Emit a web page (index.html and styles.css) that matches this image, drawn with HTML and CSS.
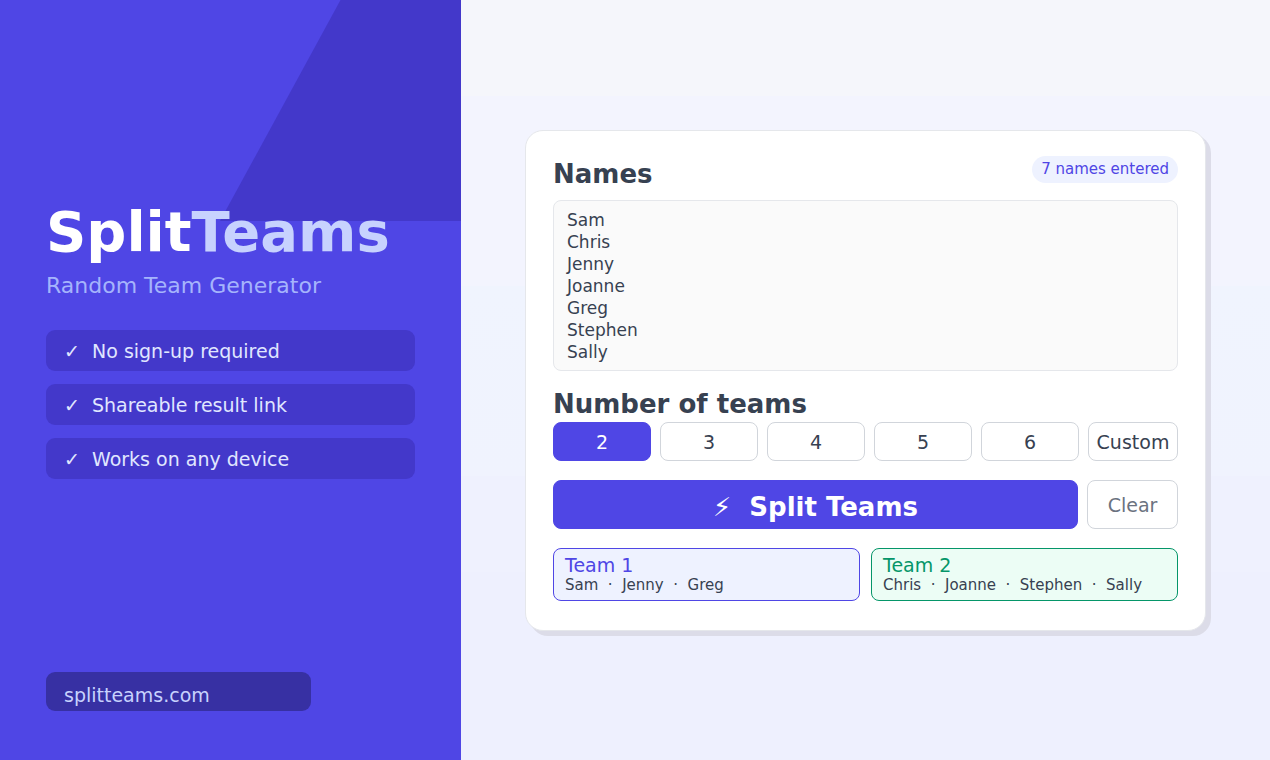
FILE: index.html
```html
<!DOCTYPE html>
<html lang="en">
<head>
    <meta charset="UTF-8">
    <meta name="viewport" content="width=device-width, initial-scale=1.0">
    <title>SplitTeams - Random Team Generator</title>
    <link rel="stylesheet" href="styles.css">
</head>
<body>
    <aside class="brand">
        <div class="intro">
            <h1>Split<span>Teams</span></h1>
            <p class="tagline">Random Team Generator</p>
            <ul class="features">
                <li><span class="tick">✓</span>No sign-up required</li>
                <li><span class="tick">✓</span>Shareable result link</li>
                <li><span class="tick">✓</span>Works on any device</li>
            </ul>
        </div>
        <a class="site" href="#">splitteams.com</a>
    </aside>

    <main>
        <form class="card">
            <div class="card-head">
                <label class="heading" for="names">Names</label>
                <span class="count">7 names entered</span>
            </div>
            <textarea id="names" rows="7" spellcheck="false">Sam
Chris
Jenny
Joanne
Greg
Stephen
Sally</textarea>

            <h2 class="heading">Number of teams</h2>
            <div class="sizes">
                <button type="button" class="active">2</button>
                <button type="button">3</button>
                <button type="button">4</button>
                <button type="button">5</button>
                <button type="button">6</button>
                <button type="button" class="custom">Custom</button>
            </div>

            <div class="actions">
                <button type="button" class="split"><span class="bolt">⚡</span>Split Teams</button>
                <button type="button" class="clear">Clear</button>
            </div>

            <div class="teams">
                <section class="team">
                    <h3>Team 1</h3>
                    <p>Sam&nbsp; ·&nbsp; Jenny&nbsp; ·&nbsp; Greg</p>
                </section>
                <section class="team green">
                    <h3>Team 2</h3>
                    <p>Chris&nbsp; ·&nbsp; Joanne&nbsp; ·&nbsp; Stephen&nbsp; ·&nbsp; Sally</p>
                </section>
            </div>
        </form>
    </main>
</body>
</html>
```
FILE: styles.css
```css
* {
    box-sizing: border-box;
}
body {
    margin: 0;
    min-height: 100vh;
    display: flex;
    font-family: "DejaVu Sans", sans-serif;
    color: #374151;
}
h1, h2, h3, p, ul {
    margin: 0;
    padding: 0;
}
button, textarea {
    font-family: inherit;
    color: inherit;
}

/* left side */
.brand {
    position: relative;
    width: 36.3%;
    padding: 199px 46px 49px;
    display: flex;
    flex-direction: column;
    justify-content: space-between;
    align-items: flex-start;
    background-color: #4f46e5;
}
.brand::before {
    content: "";
    position: absolute;
    top: 0;
    right: 0;
    width: 241px;
    height: 221px;
    background-color: #4338ca;
    clip-path: polygon(50% 0, 100% 0, 100% 100%, 0 100%);
}
.intro {
    position: relative;
    width: 100%;
}
h1 {
    font-size: 56px;
    line-height: 66px;
    color: #ffffff;
}
h1 span {
    color: #c7d2fe;
}
.tagline {
    margin-top: 7px;
    font-size: 22px;
    line-height: 28px;
    color: #a5b4fc;
}
.features {
    margin-top: 30px;
    display: flex;
    flex-direction: column;
    gap: 13px;
    list-style: none;
}
.features li {
    padding: 2px 18px 0;
    display: flex;
    font-size: 19px;
    line-height: 39px;
    border-radius: 9px;
    background-color: #4338ca;
    color: #e0e7ff;
}
.tick {
    width: 28px;
}
.site {
    width: 265px;
    padding: 8px 18px 0;
    font-size: 19px;
    line-height: 31px;
    border-radius: 9px;
    background-color: #3730a3;
    color: #c7d2fe;
    text-decoration: none;
}

/* right side */
main {
    flex: 1;
    padding: 1px 64px 0;
    display: flex;
    align-items: center;
    background: linear-gradient(#f5f6fb 96px, #f3f4fe 96px, #f3f4fe 286px, #f0f4fe 286px, #f0f3fe 476px, #eff1fe 476px, #eff1fe 572px, #eef0fe 572px);
}
.card {
    width: 100%;
    padding: 25px 27px 29px;
    border: 1px solid #e5e7eb;
    border-radius: 18px;
    background-color: #ffffff;
    box-shadow: 5px 5px 0 #dcdce8;
}
.card-head {
    display: flex;
    justify-content: space-between;
    align-items: flex-start;
}
.heading {
    font-size: 26px;
    font-weight: bold;
    line-height: 36px;
}
.count {
    padding: 0 9px;
    font-size: 15px;
    line-height: 27px;
    border-radius: 14px;
    background-color: #eef2ff;
    color: #4f46e5;
}
textarea {
    display: block;
    width: 100%;
    margin: 8px 0 15px;
    padding: 8px 13px 7px;
    font-size: 17px;
    line-height: 22px;
    border: 1px solid #e5e7eb;
    border-radius: 8px;
    background-color: #fafafa;
    resize: none;
    overflow: hidden;
}
.sizes {
    display: flex;
    gap: 9px;
}
button {
    padding: 0;
    font-size: 19px;
    border: 1px solid #d1d5db;
    border-radius: 8px;
    background-color: #ffffff;
}
.sizes button {
    flex: 1;
    height: 39px;
}
.sizes .custom {
    flex: none;
    width: 90px;
}
.actions {
    margin: 19px 0;
    display: flex;
    gap: 9px;
}
.actions button {
    height: 49px;
}
.sizes .active, .actions .split {
    border-color: #4f46e5;
    background-color: #4f46e5;
    color: #ffffff;
}
.actions .split {
    flex: 1;
    padding-top: 4px;
    font-size: 26px;
    font-weight: bold;
}
.bolt {
    margin-right: 18px;
    font-weight: normal;
}
.clear {
    width: 91px;
    color: #6b7280;
}
.teams {
    display: grid;
    grid-template-columns: 1fr 1fr;
    gap: 11px;
}
.team {
    padding: 5px 11px 6px;
    border: 1px solid #4f46e5;
    border-radius: 8px;
    background-color: #eef2ff;
}
.team h3 {
    font-size: 19px;
    font-weight: normal;
    line-height: 22px;
    color: #4f46e5;
}
.team p {
    font-size: 15px;
    line-height: 18px;
}
.team.green {
    border-color: #059669;
    background-color: #ecfdf5;
}
.green h3 {
    color: #059669;
}
```
